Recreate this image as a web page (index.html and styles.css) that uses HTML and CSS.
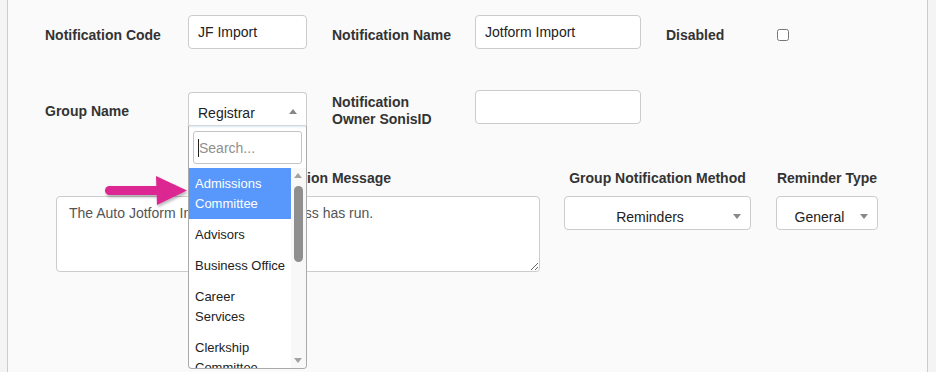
FILE: index.html
```html
<!DOCTYPE html>
<html>
<head>
    <meta charset="UTF-8">
    <title>Notification</title>
    <link rel="stylesheet" href="styles.css">
</head>
<body>
    <div class="panel">
        <div class="row rowTop">
            <label class="lbl lblWide">Notification Code</label>
            <input class="field fieldCode" type="text" value="JF Import">
            <label class="lbl lblWide gapLeft">Notification Name</label>
            <input class="field fieldName" type="text" value="Jotform Import">
            <label class="lbl lblShort gapLeft">Disabled</label>
            <input class="check" type="checkbox">
        </div>

        <div class="row rowGroup">
            <label class="lbl lblWide">Group Name</label>
            <div class="pick pickOpen">
                <span>Registrar</span>
                <span class="caret caretUp"></span>
            </div>
            <label class="lbl lblWide gapLeft">Notification<br>Owner SonisID</label>
            <input class="field fieldName" type="text" value="">
        </div>

        <div class="row rowMessage">
            <div class="col colMessage">
                <div class="lbl lblMessage">Notification Message</div>
                <textarea class="message">The Auto Jotform Import Nightly process has run.</textarea>
            </div>
            <div class="col colMethod">
                <div class="lbl lblCenter">Group Notification Method</div>
                <div class="pick pickCenter">
                    <span>Reminders</span>
                    <span class="caret caretDown"></span>
                </div>
            </div>
            <div class="col colType">
                <div class="lbl lblCenter">Reminder Type</div>
                <div class="pick pickCenter">
                    <span>General</span>
                    <span class="caret caretDown"></span>
                </div>
            </div>
        </div>

        <!-- menu aperto del Group Name -->
        <div class="dropdown">
            <div class="searchWrap">
                <div class="search"><span class="cursor"></span>Search...</div>
            </div>
            <div class="listWrap">
                <ul class="options">
                    <li class="active">Admissions Committee</li>
                    <li>Advisors</li>
                    <li>Business Office</li>
                    <li>Career Services</li>
                    <li>Clerkship Committee</li>
                </ul>
                <div class="scrollbar">
                    <span class="sbArrow sbUp"></span>
                    <span class="sbThumb"></span>
                    <span class="sbArrow sbDown"></span>
                </div>
            </div>
        </div>

        <svg class="pointer" width="100" height="44" viewBox="0 0 100 44">
            <defs>
                <filter id="shadow" x="-10%" y="-20%" width="130%" height="160%">
                    <feDropShadow dx="1" dy="2" stdDeviation="1.5" flood-color="#000" flood-opacity="0.3"/>
                </filter>
            </defs>
            <g filter="url(#shadow)">
                <rect x="5" y="17" width="56" height="9" rx="4.5" fill="#dc2891"/>
                <polygon points="56,7 87,21.5 57,36" fill="#dc2891"/>
            </g>
        </svg>
    </div>
</body>
</html>
```

FILE: styles.css
```css
*{
    box-sizing: border-box;
}
body{
    margin: 0;
    background-color: #f4f4f4;
    font-family: "Liberation Sans", Arial, sans-serif;
    color: #333;
}
.panel{
    position: relative;
    margin-left: 7px;
    width: 921px;
    height: 372px;
    background-color: #fafafa;
    border-left: 1px solid #cccccc;
    border-right: 1px solid #cccccc;
    padding: 15px 0 0 37px;
    overflow: hidden;
}
.row{
    display: flex;
    align-items: center;
}
.rowTop .lbl,
.rowTop .check{
    margin-top: 6px;
}
.rowGroup{
    margin-top: 41px;
    align-items: flex-start;
}
.rowGroup .lbl{
    align-self: center;
    margin-top: 4px;
}
.rowMessage{
    margin-top: 42px;
    align-items: flex-start;
}

.lbl{
    font-size: 14px;
    font-weight: bold;
    line-height: 17px;
    color: #333;
}
.lblWide{
    width: 143px;
}
.lblShort{
    width: 111px;
}
.gapLeft{
    margin-left: 25px;
}

.field{
    height: 34px;
    border: 1px solid #cccccc;
    border-radius: 4px;
    background-color: white;
    padding: 0 9px;
    font-family: inherit;
    font-size: 14px;
    color: #222;
    outline: none;
}
.fieldCode{
    width: 119px;
}
.fieldName{
    width: 166px;
}
.check{
    width: 12px;
    height: 12px;
    margin: 0 0 0 0;
}

.pick{
    position: relative;
    height: 34px;
    border: 1px solid #cccccc;
    border-radius: 4px;
    background-color: white;
    font-size: 14px;
    line-height: 20px;
    color: #222;
    padding: 8px 24px 6px 9px;
}
.pickOpen{
    width: 119px;
    margin-top: 2px;
    border-radius: 4px 4px 0 0;
    border-bottom-color: #d6d6d6;
    padding-top: 10px;
}
.pickCenter{
    text-align: center;
    padding-top: 10px;
}
.caret{
    position: absolute;
    right: 9px;
    top: 17px;
    width: 0;
    height: 0;
    border-left: 4px solid transparent;
    border-right: 4px solid transparent;
}
.caretUp{
    border-bottom: 5px solid #888;
    top: 16px;
}
.caretDown{
    border-top: 5px solid #888;
}

.col{
    display: flex;
    flex-direction: column;
}
.colMessage{
    margin-left: 11px;
    width: 484px;
}
.colMethod{
    margin-left: 24px;
    width: 187px;
}
.colType{
    margin-left: 25px;
    width: 102px;
}
.lblMessage{
    padding-left: 195px;
    margin-bottom: 9px;
}
.lblCenter{
    text-align: center;
    white-space: nowrap;
    margin-bottom: 9px;
}
.message{
    width: 484px;
    height: 76px;
    border: 1px solid #cccccc;
    border-radius: 4px;
    background-color: white;
    padding: 6px 12px;
    font-family: inherit;
    font-size: 14px;
    line-height: 20px;
    color: #555;
    outline: none;
}

.dropdown{
    position: absolute;
    left: 180px;
    top: 126px;
    width: 119px;
    height: 243px;
    background-color: white;
    border: 1px solid #aaaaaa;
    border-top: none;
    border-radius: 0 0 4px 4px;
    box-shadow: inset 0 2px 2px -1px #d8e8f8;
    overflow: hidden;
}
.searchWrap{
    padding: 5px 4px 4px 4px;
}
.search{
    position: relative;
    height: 33px;
    border: 1px solid #c4c4c4;
    border-radius: 3px;
    padding: 7px 0 0 5px;
    font-size: 14px;
    line-height: 18px;
    color: #8f8f8f;
}
.cursor{
    position: absolute;
    left: 4px;
    top: 7px;
    width: 1px;
    height: 18px;
    background-color: #222;
}
.listWrap{
    display: flex;
}
.options{
    list-style: none;
    margin: 0;
    padding: 0;
    width: 102px;
}
.options li{
    font-size: 13px;
    line-height: 20px;
    padding: 6px 4px 5px 6px;
    color: #222;
}
.options li.active{
    background-color: #5897fb;
    color: white;
}
.scrollbar{
    position: relative;
    width: 15px;
    height: 200px;
    background-color: #f8f8f8;
}
.sbArrow{
    position: absolute;
    left: 3px;
    width: 0;
    height: 0;
    border-left: 4.5px solid transparent;
    border-right: 4.5px solid transparent;
}
.sbUp{
    top: 5px;
    border-bottom: 5px solid #a3a3a3;
}
.sbDown{
    top: 190px;
    border-top: 5px solid #a3a3a3;
}
.sbThumb{
    position: absolute;
    left: 3px;
    top: 18px;
    width: 9px;
    height: 76px;
    border-radius: 5px;
    background-color: #8f8f8f;
}

.pointer{
    position: absolute;
    left: 92px;
    top: 169px;
}
```
